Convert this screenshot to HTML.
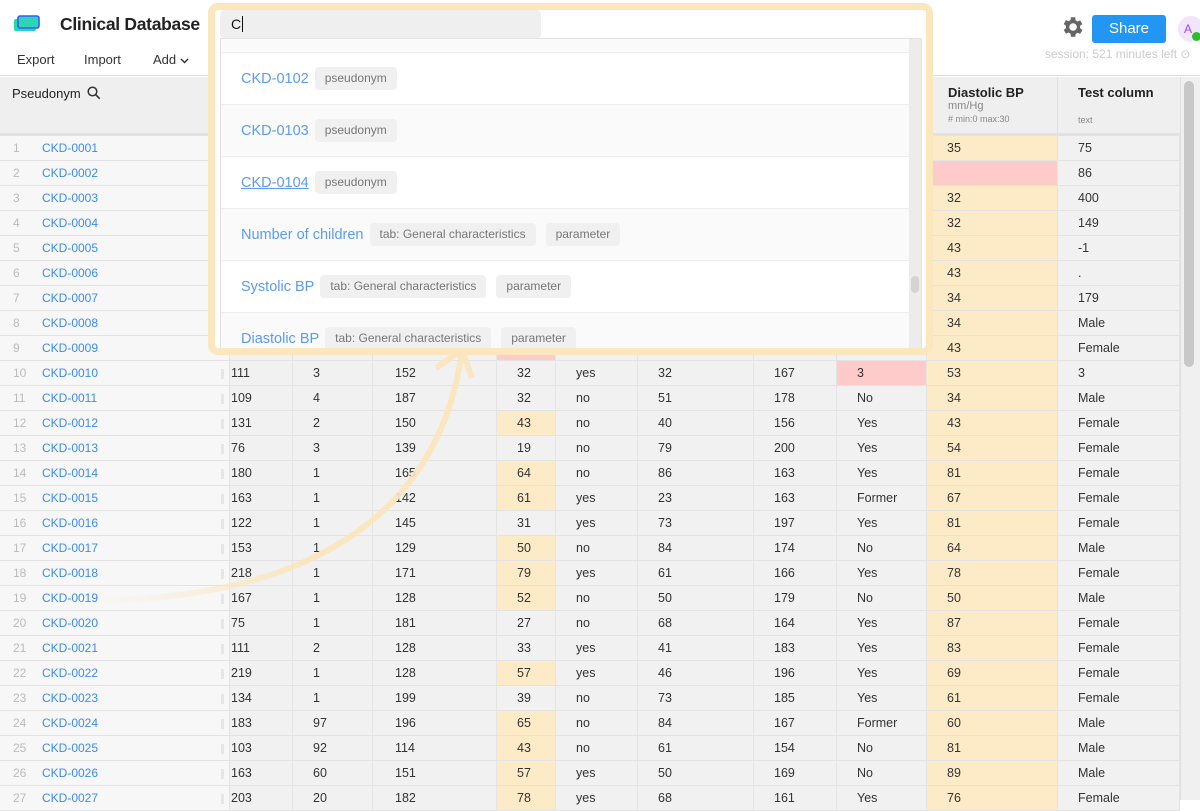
<!DOCTYPE html>
<html><head><meta charset="utf-8"><style>
*{box-sizing:border-box;margin:0;padding:0}
body{width:1200px;height:800px;overflow:hidden;background:#fff;font-family:"Liberation Sans",sans-serif;color:#333;position:relative}
.top{position:absolute;left:0;top:0;width:1200px;height:76px;background:#fff;border-bottom:1px solid #ddd}
.title{position:absolute;left:60px;top:14px;font-size:17.5px;font-weight:bold;color:#222;letter-spacing:-0.3px}
.menu{position:absolute;top:52px;font-size:13px;color:#333}
.hdr{position:absolute;left:0;top:77px;width:1180px;height:59px;background:#efefef;border-bottom:3px solid #e2e2e2}
.r{position:absolute;left:0;width:1180px;height:25px;display:flex;font-size:12.5px;line-height:24px;border-bottom:1px solid #e3e3e3}
.r span{display:block;height:24px;border-right:1px solid #e4e4e4;background:#f1f1f1;padding-left:20px;white-space:nowrap;overflow:hidden}
.r span:nth-child(1){width:230px;background:#f7f7f7;padding-left:0;position:relative}
.r span:nth-child(1) i{position:absolute;left:13px;font-style:normal;color:#bbb;font-size:12px}
.r span:nth-child(1) a{position:absolute;left:42px;color:#3b8cf0;text-decoration:none;font-size:12px}
.r span:nth-child(1) em{position:absolute;left:221px;top:8px;width:3px;height:10px;background:#e6e6e6}
.r span:nth-child(2){width:63px;padding-left:1px}
.r span:nth-child(3){width:80px}
.r span:nth-child(4){width:124px;padding-left:22px}
.r span:nth-child(5){width:59px}
.r span:nth-child(6){width:82px}
.r span:nth-child(7){width:116px}
.r span:nth-child(8){width:83px}
.r span:nth-child(9){width:90px}
.r span:nth-child(10){width:131px;background:#fdebc8}
.r span:nth-child(11){width:122px}
.r span.o{background:#fdebc8}
.r span.p{background:#fecaca}
.sb{position:absolute;left:1180px;top:77px;width:20px;height:723px;background:#f0f0f0;border-left:1px solid #e0e0e0}
.hl{position:absolute;left:208px;top:3px;width:725px;height:352px;border:7px solid #fbe6bd;border-radius:10px;background:#fff}
.inp{position:absolute;left:220px;top:10px;width:321px;height:29px;background:#efefef;border-radius:5px;font-size:14px;line-height:29px;padding-left:11px;color:#111}
.dd{position:absolute;left:220px;top:38px;width:702px;height:310px;background:#fff;border:1px solid #e2e2e2;border-bottom:none;overflow:hidden}
.it{position:absolute;left:0;width:690px;height:52px;border-bottom:1px solid #eee;font-size:14.5px;line-height:52px;padding-left:20px;color:#5a9cf0}
.it:nth-child(odd){background:#fafafa}
.tg{display:inline-block;background:#f0f0f0;color:#777;font-size:12px;line-height:23px;padding:0 10px;border-radius:4px;margin-left:6px;vertical-align:1px}
.dsb{position:absolute;right:0;top:0;width:12px;height:310px;background:#ececec}
</style></head><body>
<div class="top">
<svg style="position:absolute;left:13px;top:14px" width="28" height="20" viewBox="0 0 28 20"><rect x="1" y="5" width="22" height="12" rx="2" fill="#1fdcb0"/><rect x="5" y="2" width="21" height="12" rx="2" fill="#2ad6b6" stroke="#3a5cf0" stroke-width="1.6"/></svg>
<div class="title">Clinical Database</div>
<div class="menu" style="left:17px">Export</div>
<div class="menu" style="left:84px">Import</div>
<div class="menu" style="left:153px">Add <svg width="9" height="6" viewBox="0 0 9 6"><path d="M1 1l3.5 3.5L8 1" stroke="#333" stroke-width="1.4" fill="none"/></svg></div>
<svg style="position:absolute;left:1059px;top:14px" width="26" height="26" viewBox="0 0 24 24"><path fill="#666" d="M19.4 13a7.5 7.5 0 0 0 0-2l2.1-1.6-2-3.5-2.5 1a7 7 0 0 0-1.7-1L15 3h-4l-.4 2.7a7 7 0 0 0-1.7 1l-2.5-1-2 3.5L6.5 11a7.5 7.5 0 0 0 0 2l-2.1 1.6 2 3.5 2.5-1a7 7 0 0 0 1.7 1L11 21h4l.4-2.7a7 7 0 0 0 1.7-1l2.5 1 2-3.5zM13 15.5a3.5 3.5 0 1 1 0-7 3.5 3.5 0 0 1 0 7z"/></svg>
<div style="position:absolute;left:1092px;top:15px;width:74px;height:28px;background:#2196f3;border-radius:3px;color:#fff;font-size:15px;line-height:28px;text-align:center">Share</div>
<div style="position:absolute;left:1178px;top:16px;width:26px;height:26px;border-radius:13px;background:#f1e4fb;color:#a24de0;font-size:12px;line-height:26px;padding-left:6px">A</div>
<div style="position:absolute;left:1192px;top:32px;width:9px;height:9px;border-radius:5px;background:#2bc02b"></div>
<div style="position:absolute;left:1045px;top:47px;font-size:12px;color:#ccc;white-space:nowrap">session: 521 minutes left ⊙</div>
</div>
<div class="hdr">
<div style="position:absolute;left:12px;top:9px;font-size:13px;color:#222">Pseudonym <svg width="14" height="14" viewBox="0 0 14 14" style="vertical-align:-2px;margin-left:3px"><circle cx="5.5" cy="5.5" r="4.3" stroke="#333" stroke-width="1.5" fill="none"/><path d="M8.7 8.7l4 4" stroke="#333" stroke-width="1.6"/></svg></div>
<div style="position:absolute;left:927px;top:0;width:131px;height:56px;border-left:1px solid #e2e2e2;border-right:1px solid #e2e2e2;padding:8px 0 0 20px"><div style="font-size:13px;font-weight:bold;color:#222">Diastolic BP</div><div style="font-size:11px;color:#888">mm/Hg</div><div style="font-size:9px;color:#888;margin-top:2px"># min:0 max:30</div></div>
<div style="position:absolute;left:1078px;top:8px;font-size:13px;font-weight:bold;color:#222">Test column</div>
<div style="position:absolute;left:1078px;top:38px;font-size:9px;color:#888">text</div>
</div>
<div class="r" style="top:136px"><span><i>1</i><a>CKD-0001</a><em></em></span><span></span><span></span><span></span><span></span><span></span><span></span><span></span><span></span><span>35</span><span>75</span></div>
<div class="r" style="top:161px"><span><i>2</i><a>CKD-0002</a><em></em></span><span></span><span></span><span></span><span></span><span></span><span></span><span></span><span></span><span class="p"></span><span>86</span></div>
<div class="r" style="top:186px"><span><i>3</i><a>CKD-0003</a><em></em></span><span></span><span></span><span></span><span></span><span></span><span></span><span></span><span></span><span>32</span><span>400</span></div>
<div class="r" style="top:211px"><span><i>4</i><a>CKD-0004</a><em></em></span><span></span><span></span><span></span><span></span><span></span><span></span><span></span><span></span><span>32</span><span>149</span></div>
<div class="r" style="top:236px"><span><i>5</i><a>CKD-0005</a><em></em></span><span></span><span></span><span></span><span></span><span></span><span></span><span></span><span></span><span>43</span><span>-1</span></div>
<div class="r" style="top:261px"><span><i>6</i><a>CKD-0006</a><em></em></span><span></span><span></span><span></span><span></span><span></span><span></span><span></span><span></span><span>43</span><span>.</span></div>
<div class="r" style="top:286px"><span><i>7</i><a>CKD-0007</a><em></em></span><span></span><span></span><span></span><span></span><span></span><span></span><span></span><span></span><span>34</span><span>179</span></div>
<div class="r" style="top:311px"><span><i>8</i><a>CKD-0008</a><em></em></span><span></span><span></span><span></span><span></span><span></span><span></span><span></span><span></span><span>34</span><span>Male</span></div>
<div class="r" style="top:336px"><span><i>9</i><a>CKD-0009</a><em></em></span><span></span><span></span><span></span><span class="p"></span><span></span><span></span><span></span><span></span><span>43</span><span>Female</span></div>
<div class="r" style="top:361px"><span><i>10</i><a>CKD-0010</a><em></em></span><span>111</span><span>3</span><span>152</span><span>32</span><span>yes</span><span>32</span><span>167</span><span class="p">3</span><span>53</span><span>3</span></div>
<div class="r" style="top:386px"><span><i>11</i><a>CKD-0011</a><em></em></span><span>109</span><span>4</span><span>187</span><span>32</span><span>no</span><span>51</span><span>178</span><span>No</span><span>34</span><span>Male</span></div>
<div class="r" style="top:411px"><span><i>12</i><a>CKD-0012</a><em></em></span><span>131</span><span>2</span><span>150</span><span class="o">43</span><span>no</span><span>40</span><span>156</span><span>Yes</span><span>43</span><span>Female</span></div>
<div class="r" style="top:436px"><span><i>13</i><a>CKD-0013</a><em></em></span><span>76</span><span>3</span><span>139</span><span>19</span><span>no</span><span>79</span><span>200</span><span>Yes</span><span>54</span><span>Female</span></div>
<div class="r" style="top:461px"><span><i>14</i><a>CKD-0014</a><em></em></span><span>180</span><span>1</span><span>165</span><span class="o">64</span><span>no</span><span>86</span><span>163</span><span>Yes</span><span>81</span><span>Female</span></div>
<div class="r" style="top:486px"><span><i>15</i><a>CKD-0015</a><em></em></span><span>163</span><span>1</span><span>142</span><span class="o">61</span><span>yes</span><span>23</span><span>163</span><span>Former</span><span>67</span><span>Female</span></div>
<div class="r" style="top:511px"><span><i>16</i><a>CKD-0016</a><em></em></span><span>122</span><span>1</span><span>145</span><span>31</span><span>yes</span><span>73</span><span>197</span><span>Yes</span><span>81</span><span>Female</span></div>
<div class="r" style="top:536px"><span><i>17</i><a>CKD-0017</a><em></em></span><span>153</span><span>1</span><span>129</span><span class="o">50</span><span>no</span><span>84</span><span>174</span><span>No</span><span>64</span><span>Male</span></div>
<div class="r" style="top:561px"><span><i>18</i><a>CKD-0018</a><em></em></span><span>218</span><span>1</span><span>171</span><span class="o">79</span><span>yes</span><span>61</span><span>166</span><span>Yes</span><span>78</span><span>Female</span></div>
<div class="r" style="top:586px"><span><i>19</i><a>CKD-0019</a><em></em></span><span>167</span><span>1</span><span>128</span><span class="o">52</span><span>no</span><span>50</span><span>179</span><span>No</span><span>50</span><span>Male</span></div>
<div class="r" style="top:611px"><span><i>20</i><a>CKD-0020</a><em></em></span><span>75</span><span>1</span><span>181</span><span>27</span><span>no</span><span>68</span><span>164</span><span>Yes</span><span>87</span><span>Female</span></div>
<div class="r" style="top:636px"><span><i>21</i><a>CKD-0021</a><em></em></span><span>111</span><span>2</span><span>128</span><span>33</span><span>yes</span><span>41</span><span>183</span><span>Yes</span><span>83</span><span>Female</span></div>
<div class="r" style="top:661px"><span><i>22</i><a>CKD-0022</a><em></em></span><span>219</span><span>1</span><span>128</span><span class="o">57</span><span>yes</span><span>46</span><span>196</span><span>Yes</span><span>69</span><span>Female</span></div>
<div class="r" style="top:686px"><span><i>23</i><a>CKD-0023</a><em></em></span><span>134</span><span>1</span><span>199</span><span>39</span><span>no</span><span>73</span><span>185</span><span>Yes</span><span>61</span><span>Female</span></div>
<div class="r" style="top:711px"><span><i>24</i><a>CKD-0024</a><em></em></span><span>183</span><span>97</span><span>196</span><span class="o">65</span><span>no</span><span>84</span><span>167</span><span>Former</span><span>60</span><span>Male</span></div>
<div class="r" style="top:736px"><span><i>25</i><a>CKD-0025</a><em></em></span><span>103</span><span>92</span><span>114</span><span class="o">43</span><span>no</span><span>61</span><span>154</span><span>No</span><span>81</span><span>Male</span></div>
<div class="r" style="top:761px"><span><i>26</i><a>CKD-0026</a><em></em></span><span>163</span><span>60</span><span>151</span><span class="o">57</span><span>yes</span><span>50</span><span>169</span><span>No</span><span>89</span><span>Male</span></div>
<div class="r" style="top:786px"><span><i>27</i><a>CKD-0027</a><em></em></span><span>203</span><span>20</span><span>182</span><span class="o">78</span><span>yes</span><span>68</span><span>161</span><span>Yes</span><span>76</span><span>Female</span></div>
<div class="sb"><div style="position:absolute;left:3px;top:4px;width:10px;height:286px;background:#c8c8c8;border-radius:5px"></div></div>
<svg style="position:absolute;left:0;top:0" width="1200" height="800"><defs><linearGradient id="g" x1="100" y1="0" x2="300" y2="0" gradientUnits="userSpaceOnUse"><stop offset="0" stop-color="#fbe6bd" stop-opacity="0"/><stop offset="1" stop-color="#fbe6bd" stop-opacity="0.9"/></linearGradient></defs><path d="M95 600C300 600 440 520 462 350" stroke="url(#g)" stroke-width="6" fill="none"/><path d="M436 368L462 350L472 378" stroke="#fbe6bd" stroke-width="6" fill="none" opacity="0.9"/></svg>
<div class="hl"></div>
<div class="inp">C<span style="border-left:1px solid #111;margin-left:1px"></span></div>
<div class="dd">
<div class="it" style="top:-38px"></div>
<div class="it" style="top:14px">CKD-0102<span class="tg">pseudonym</span></div>
<div class="it" style="top:66px">CKD-0103<span class="tg">pseudonym</span></div>
<div class="it" style="top:118px"><u>CKD-0104</u><span class="tg">pseudonym</span></div>
<div class="it" style="top:170px">Number of children<span class="tg">tab: General characteristics</span><span class="tg" style="margin-left:10px">parameter</span></div>
<div class="it" style="top:222px">Systolic BP<span class="tg">tab: General characteristics</span><span class="tg" style="margin-left:10px">parameter</span></div>
<div class="it" style="top:274px">Diastolic BP<span class="tg">tab: General characteristics</span><span class="tg" style="margin-left:10px">parameter</span></div>
<div class="dsb"><div style="position:absolute;left:2px;top:237px;width:8px;height:17px;background:#d4d4d4;border-radius:4px"></div></div>
</div>
</body></html>
